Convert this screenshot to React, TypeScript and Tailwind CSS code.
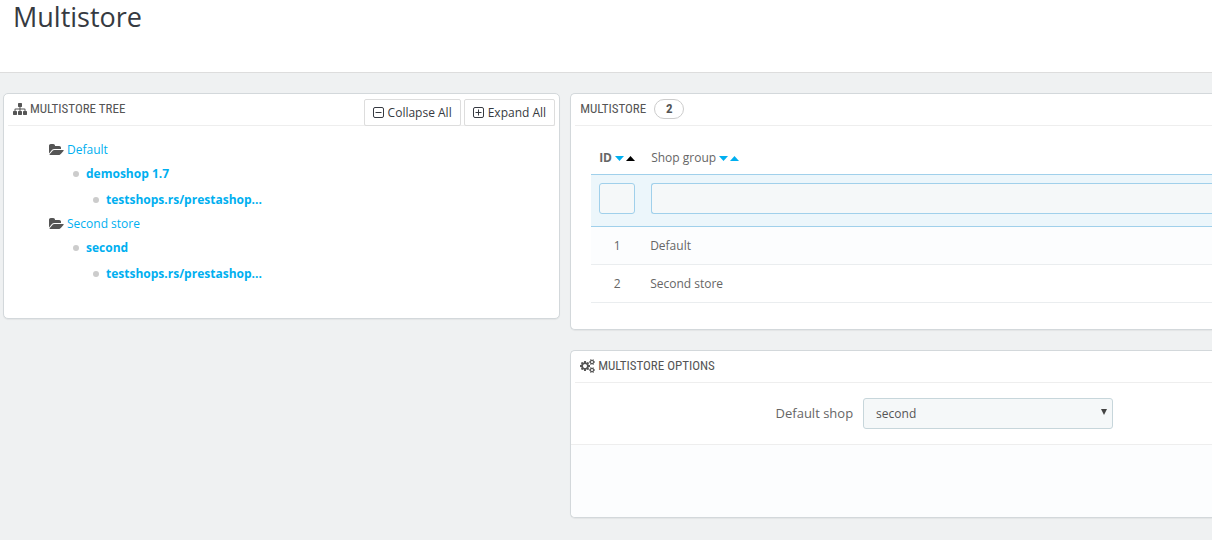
import React from "react";
import clsx from "clsx";

const FONT = "font-['Open_Sans','Noto_Sans',sans-serif]";
const CAPS =
  "font-['Ubuntu_Condensed','Roboto_Condensed','Open_Sans_Condensed','Roboto',sans-serif]";

const tree = [
  {
    name: "Default",
    shops: [{ name: "demoshop 1.7", urls: ["testshops.rs/prestashop..."] }],
  },
  {
    name: "Second store",
    shops: [{ name: "second", urls: ["testshops.rs/prestashop..."] }],
  },
];

const groups = [
  { id: 1, name: "Default" },
  { id: 2, name: "Second store" },
];

function SitemapIcon() {
  return (
    <svg viewBox="0 0 1792 1792" className="size-3.5" fill="currentColor">
      <path d="M1792 1248v320q0 40-28 68t-68 28h-320q-40 0-68-28t-28-68v-320q0-40 28-68t68-28h96v-192h-512v192h96q40 0 68 28t28 68v320q0 40-28 68t-68 28h-320q-40 0-68-28t-28-68v-320q0-40 28-68t68-28h96v-192h-512v192h96q40 0 68 28t28 68v320q0 40-28 68t-68 28h-320q-40 0-68-28t-28-68v-320q0-40 28-68t68-28h96v-192q0-52 38-90t90-38h512v-192h-96q-40 0-68-28t-28-68v-320q0-40 28-68t68-28h320q40 0 68 28t28 68v320q0 40-28 68t-68 28h-96v192h512q52 0 90 38t38 90v192h96q40 0 68 28t28 68z" />
    </svg>
  );
}

function CogsIcon() {
  return (
    <svg viewBox="0 0 1920 1792" className="h-3.5 w-[15px]" fill="currentColor">
      <path d="M896 896q0-106-75-181t-181-75-181 75-75 181 75 181 181 75 181-75 75-181zm768 512q0-52-38-90t-90-38-90 38-38 90q0 53 37.5 90.5t90.5 37.5 90.5-37.5 37.5-90.5zm0-1024q0-52-38-90t-90-38-90 38-38 90q0 53 37.5 90.5t90.5 37.5 90.5-37.5 37.5-90.5zm-384 421v185q0 10-7 19.5t-16 10.5l-155 24q-11 35-32 76 34 48 90 115 7 11 7 20 0 12-7 19-23 30-82.5 89.5t-78.5 59.5q-11 0-21-7l-115-90q-37 19-77 31-11 108-23 155-7 24-30 24h-186q-11 0-20-7.5t-10-17.5l-23-153q-34-10-75-31l-118 89q-7 7-20 7-11 0-21-8-144-133-144-160 0-9 7-19 10-14 41-53t47-61q-23-44-35-82l-152-24q-10-1-17-9.5t-7-19.5v-185q0-10 7-19.5t16-10.5l155-24q11-35 32-76-34-48-90-115-7-11-7-20 0-12 7-20 22-30 82-89t79-59q11 0 21 7l115 90q34-18 77-32 11-108 23-154 7-24 30-24h186q11 0 20 7.5t10 17.5l23 153q34 10 75 31l118-89q8-7 20-7 11 0 21 8 144 133 144 160 0 8-7 19-12 16-42 54t-45 60q23 48 34 82l152 23q10 2 17 10.5t7 19.5zm640 533v140q0 16-149 31-12 27-30 52 51 113 51 138 0 4-4 7-122 71-124 71-8 0-46-47t-52-68q-20 2-30 2t-30-2q-14 21-52 68t-46 47q-2 0-124-71-4-3-4-7 0-25 51-138-18-25-30-52-149-15-149-31v-140q0-16 149-31 13-29 30-52-51-113-51-138 0-4 4-7 4-2 35-20t59-34 30-16q8 0 46 46.5t52 67.5q20-2 30-2t30 2q51-71 92-112l6-2q4 0 124 70 4 3 4 7 0 25-51 138 17 23 30 52 149 15 149 31zm0-1024v140q0 16-149 31-12 27-30 52 51 113 51 138 0 4-4 7-122 71-124 71-8 0-46-47t-52-68q-20 2-30 2t-30-2q-14 21-52 68t-46 47q-2 0-124-71-4-3-4-7 0-25 51-138-18-25-30-52-149-15-149-31v-140q0-16 149-31 13-29 30-52-51-113-51-138 0-4 4-7 4-2 35-20t59-34 30-16q8 0 46 46.5t52 67.5q20-2 30-2t30 2q51-71 92-112l6-2q4 0 124 70 4 3 4 7 0 25-51 138 17 23 30 52 149 15 149 31z" />
    </svg>
  );
}

function FolderIcon() {
  return (
    <svg viewBox="0 0 1920 1792" className="h-3.5 w-[15px]" fill="currentColor">
      <path d="M1879 952q0 31-31 66l-336 396q-43 51-120.5 86.5t-143.5 35.5h-1088q-34 0-60.5-13t-26.5-43q0-31 31-66l336-396q43-51 120.5-86.5t143.5-35.5h1088q34 0 60.5 13t26.5 43zm-343-344v160h-832q-94 0-197 47.5t-164 119.5l-337 396-5 6q0-4-.5-12.5t-.5-12.5v-960q0-92 66-158t158-66h320q92 0 158 66t66 158v32h544q92 0 158 66t66 158z" />
    </svg>
  );
}

function BoxIcon({ plus }: { plus?: boolean }) {
  return (
    <svg
      viewBox="0 0 12 12"
      className="size-3"
      fill="none"
      stroke="currentColor"
    >
      <rect x="0.5" y="0.5" width="10" height="10" rx="1.5" />
      <path d={plus ? "M2.5 5.5h6M5.5 2.5v6" : "M2.5 5.5h6"} />
    </svg>
  );
}

function Sort({ active }: { active?: boolean }) {
  return (
    <span className="flex gap-0.5 text-[#00aff0]">
      <button type="button" aria-label="Sort descending">
        <svg viewBox="0 0 9 5" className="h-[5px] w-[9px]" fill="currentColor">
          <path d="M0 0h9L4.5 5z" />
        </svg>
      </button>
      <button
        type="button"
        aria-label="Sort ascending"
        className={clsx(active && "text-black")}
      >
        <svg viewBox="0 0 9 5" className="h-[5px] w-[9px]" fill="currentColor">
          <path d="M0 5h9L4.5 0z" />
        </svg>
      </button>
    </span>
  );
}

function Heading({
  bleed,
  children,
}: {
  bleed?: boolean;
  children: React.ReactNode;
}) {
  return (
    <h2
      className={clsx(
        CAPS,
        "ml-1 flex h-8 items-center gap-[3px] border-b border-[#eee] px-[5px] pb-px text-[13px] text-[#555]",
        !bleed && "mr-1",
      )}
    >
      {children}
    </h2>
  );
}

export default function App() {
  return (
    <div
      className={clsx(FONT, "min-h-screen bg-[#eff1f2] text-xs text-[#666]")}
    >
      <header className="h-[73px] border-b border-[#ddd] bg-white px-[13px]">
        <h1 className="text-[27px] leading-[34px] text-[#363a41]">
          Multistore
        </h1>
      </header>

      <main className="flex items-start gap-2.5 pt-5 pl-[3px]">
        <section className="w-[calc(46%+1px)] shrink-0 rounded-[5px] border border-[#d3d8db] bg-white pb-8 shadow-[0_1px_1px_rgba(0,0,0,0.05)]">
          <div className="relative">
            <Heading>
              <SitemapIcon />
              MULTISTORE TREE
            </Heading>
            <div className="absolute top-[5px] right-1 flex gap-[3px] text-[#363a41]">
              <button
                type="button"
                className="flex h-[27px] items-center gap-[3px] rounded-[2px] border border-[#ddd] bg-white px-2"
              >
                <BoxIcon />
                Collapse All
              </button>
              <button
                type="button"
                className="flex h-[27px] items-center gap-[3px] rounded-[2px] border border-[#ddd] bg-white px-2"
              >
                <BoxIcon plus />
                Expand All
              </button>
            </div>
          </div>
          <ul className="pt-3 pl-[45px] text-[#00aff0]">
            {tree.map((group) => (
              <li key={group.name}>
                <div className="flex h-6 items-center gap-[3px]">
                  <span className="text-[#555]">
                    <FolderIcon />
                  </span>
                  <a href="#">{group.name}</a>
                </div>
                <ul className="pl-6 font-bold">
                  {group.shops.map((shop) => (
                    <li key={shop.name}>
                      <div className="flex h-6 items-center gap-[7px]">
                        <span className="size-1.5 rounded-full bg-[#ccc]" />
                        <a href="#">{shop.name}</a>
                      </div>
                      <ul className="pl-5">
                        {shop.urls.map((url) => (
                          <li
                            key={url}
                            className="flex h-[26px] items-center gap-[7px] pt-0.5"
                          >
                            <span className="size-1.5 rounded-full bg-[#ccc]" />
                            <a href="#">{url}</a>
                          </li>
                        ))}
                      </ul>
                    </li>
                  ))}
                </ul>
              </li>
            ))}
          </ul>
        </section>

        <div className="flex min-w-0 flex-1 flex-col gap-5">
          <section className="rounded-l-[5px] border border-r-0 border-[#d3d8db] bg-white pb-[26px] shadow-[0_1px_1px_rgba(0,0,0,0.05)]">
            <Heading bleed>
              MULTISTORE
              <span className="ml-[5px] flex h-5 w-[30px] items-center justify-center rounded-full border border-[#ccc] font-bold">
                2
              </span>
            </Heading>
            <div className="pt-[13px] pl-5">
              <table className="w-full table-fixed border-collapse text-left">
                <thead>
                  <tr className="h-[35px] border-b border-[#a0d0eb]">
                    <th className="w-[52px] pt-1 pl-2">
                      <span className="flex items-center gap-[3px]">
                        ID
                        <Sort active />
                      </span>
                    </th>
                    <th className="pt-1 pl-2 font-normal">
                      <span className="flex items-center gap-[3px]">
                        Shop group
                        <Sort />
                      </span>
                    </th>
                  </tr>
                  <tr className="h-[52px] border-b border-[#a0d0eb] bg-[#ecf6fb]">
                    <th className="px-2 pb-1">
                      <input
                        aria-label="Filter by ID"
                        className="block h-[31px] w-9 rounded-[3px] border border-[#a0d0eb] bg-[#f5f8f9] px-2 font-normal"
                      />
                    </th>
                    <th className="pb-1 pl-2">
                      <input
                        aria-label="Filter by shop group"
                        className="block h-[31px] w-full rounded-l-[3px] border border-r-0 border-[#a0d0eb] bg-[#f5f8f9] px-2 font-normal"
                      />
                    </th>
                  </tr>
                </thead>
                <tbody>
                  {groups.map((group) => (
                    <tr
                      key={group.id}
                      className="h-[38px] border-b border-[#eaedef] odd:bg-[#fcfdfe]"
                    >
                      <td className="pt-0.5 text-center">{group.id}</td>
                      <td className="pt-0.5 pl-[7px]">{group.name}</td>
                    </tr>
                  ))}
                </tbody>
              </table>
            </div>
          </section>

          <section className="rounded-l-[5px] border border-r-0 border-[#d3d8db] bg-white shadow-[0_1px_1px_rgba(0,0,0,0.05)]">
            <Heading bleed>
              <CogsIcon />
              MULTISTORE OPTIONS
            </Heading>
            <div className="flex items-center gap-2.5 py-[15px]">
              <label
                htmlFor="default-shop"
                className="w-[44%] pt-0.5 text-right text-[13px]"
              >
                Default shop
              </label>
              <div className="relative w-[250px]">
                <select
                  id="default-shop"
                  defaultValue="second"
                  className="block h-[31px] w-full appearance-none rounded-[3px] border border-[#c7d6db] bg-[#f5f8f9] px-3 pt-0.5 text-[#555]"
                >
                  <option value="second">second</option>
                  <option value="demoshop">demoshop 1.7</option>
                </select>
                <svg
                  viewBox="0 0 6 6"
                  className="pointer-events-none absolute top-[11px] right-1.5 size-1.5"
                  fill="#444"
                >
                  <path d="M0 0h6L3 6z" />
                </svg>
              </div>
            </div>
            <div className="h-[73px] rounded-bl-[5px] border-t border-[#eee] bg-[#fcfdfe]" />
          </section>
        </div>
      </main>
    </div>
  );
}
